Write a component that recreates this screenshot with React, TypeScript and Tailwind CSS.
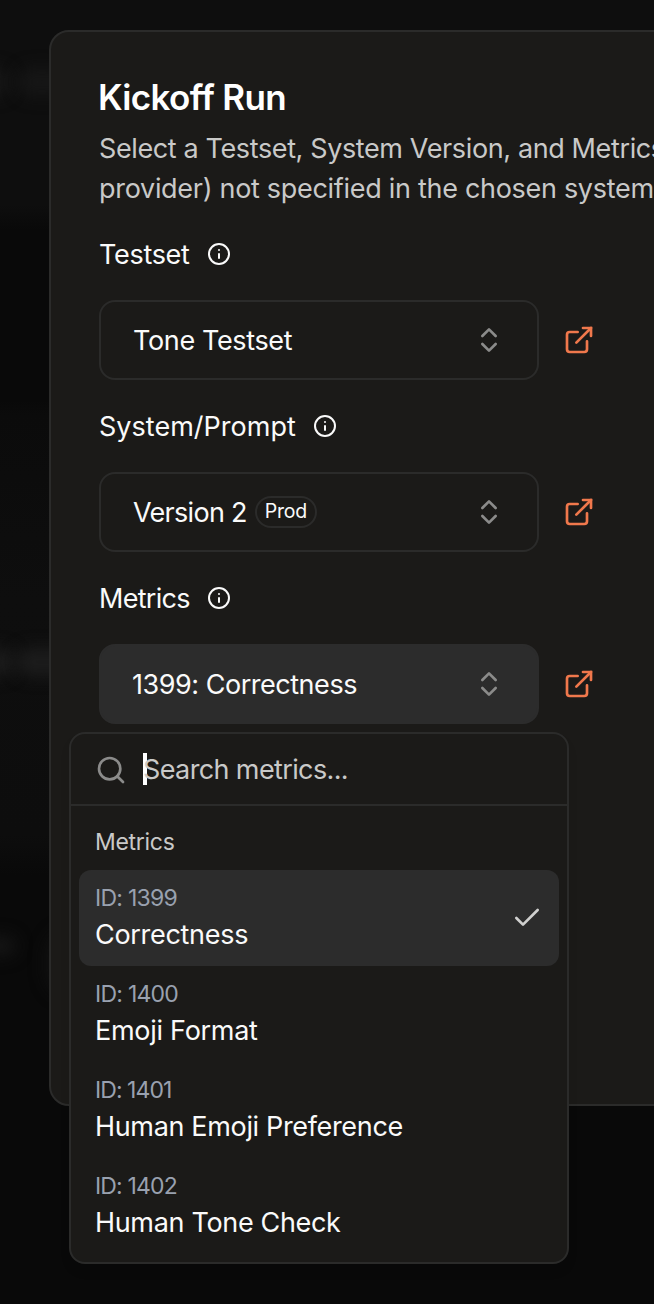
import { Check, ChevronsUpDown, Info, Search } from "lucide-react";
import type { ReactNode } from "react";

function ExternalLinkIcon() {
  return (
    <svg
      width="32"
      height="32"
      viewBox="0 0 24 24"
      fill="none"
      stroke="#f0784c"
      strokeWidth="2"
      className="shrink-0"
    >
      <path d="M18 13v6a2 2 0 0 1-2 2H5a2 2 0 0 1-2-2V8a2 2 0 0 1 2-2h6" strokeLinecap="round" />
      <polyline points="15 3 21 3 21 9" strokeLinecap="round" strokeLinejoin="miter" />
      <line x1="10" x2="21" y1="14" y2="3" strokeLinecap="round" />
    </svg>
  );
}

interface FieldProps {
  label: string;
  labelClass: string;
  open?: boolean;
  children: ReactNode;
}

function Field({ label, labelClass, open, children }: FieldProps) {
  return (
    <div className="flex flex-col gap-8">
      <div className="flex h-7 items-center gap-[17px]">
        <label className={`pt-0.5 text-[27px] leading-7 text-[#fafafa] ${labelClass}`}>{label}</label>
        <Info className="size-6 text-[#fafafa]" strokeWidth={2} />
      </div>
      <div className="flex items-center gap-6">
        <button
          className={`flex h-20 w-[440px] items-center justify-between rounded-2xl border-2 pr-8 pl-8 text-[27px] text-[#fafafa] ${
            open ? "border-[#2c2c2c] bg-[#2c2c2c]" : "border-[#2b2b2a]"
          }`}
        >
          {children}
          <ChevronsUpDown className="size-8 text-[#8b8b8a]" strokeWidth={2} />
        </button>
        <a>
          <ExternalLinkIcon />
        </a>
      </div>
    </div>
  );
}

const metrics = [
  { id: "1399", name: "Correctness", idClass: "tracking-[-0.75px]", nameClass: "tracking-[-0.3px]", selected: true },
  { id: "1400", name: "Emoji Format", idClass: "tracking-[-0.75px]", nameClass: "tracking-[-0.28px]" },
  { id: "1401", name: "Human Emoji Preference", idClass: "tracking-[-0.95px]", nameClass: "tracking-[-0.34px]" },
  { id: "1402", name: "Human Tone Check", idClass: "tracking-[-0.85px]", nameClass: "tracking-[-0.33px]" },
];

function MetricsPopover() {
  return (
    <div className="absolute top-[732px] left-[69px] w-[500px] rounded-2xl border-2 border-[#2b2b2a] bg-[#1b1a18] shadow-[0_8px_12px_-2px_rgba(0,0,0,0.1)]">
      <div className="flex h-[72px] items-center border-b-2 border-[#2b2b2a] pl-6">
        <Search className="mt-0.5 size-8 text-[#8b8b8a]" strokeWidth={2} />
        <span className="ml-4 h-8 w-1 bg-white" />
        <span className="-ml-1 pt-0.5 text-[27px] leading-10 tracking-[-0.62px] text-[#c9c9c8]">Search metrics...</span>
      </div>
      <div className="p-2">
        <div className="flex h-14 items-center px-4 text-[23px] tracking-[-0.3px] text-[#c9c9c8]">Metrics</div>
        {metrics.map((m) => (
          <div
            key={m.id}
            className={`flex h-24 items-center justify-between rounded-xl px-4 ${m.selected ? "bg-[#2c2c2c]" : ""}`}
          >
            <div className="flex flex-col">
              <span className={`text-[23px] leading-8 text-[#99a1af] ${m.idClass}`}>ID: {m.id}</span>
              <span className={`mt-px -mb-px text-[27px] leading-10 text-[#fafafa] ${m.nameClass}`}>{m.name}</span>
            </div>
            {m.selected && <Check className="size-8 text-[#d0d0cf]" strokeWidth={2} />}
          </div>
        ))}
      </div>
    </div>
  );
}

function Backdrop() {
  return (
    <div className="absolute inset-0 overflow-hidden">
      <div className="absolute top-[68px] -left-10 h-7 w-[50px] rounded-full bg-[#171717] blur-[8px]" />
      <div className="absolute top-[68px] left-[18px] h-7 w-12 rounded-full bg-[#161616] blur-[8px]" />
      <div className="absolute top-[648px] -left-10 h-7 w-[54px] rounded-full bg-[#1c1c1c] blur-[8px]" />
      <div className="absolute top-[648px] left-4 h-7 w-14 rounded-full bg-[#1c1c1c] blur-[8px]" />
      <div className="absolute top-[936px] -left-8 h-5 w-12 rounded-full bg-[#151515] blur-[8px]" />
      <div className="absolute top-[930px] left-[46px] h-[66px] w-12 rounded-full bg-[#111111] blur-[8px]" />
    </div>
  );
}

export default function App() {
  return (
    <div className="relative h-[1304px] w-full overflow-hidden bg-[linear-gradient(180deg,#0e0e0e_0px,#0e0e0e_205px,#090909_230px,#090909_400px,#0b0b0b_415px,#0e0e0e_600px,#0d0d0d_835px,#090909_875px,#090909_1304px)] font-['Inter',sans-serif] font-normal">
      <Backdrop />
      <div className="relative mt-[30px] ml-[49px] flex h-[1076px] w-[900px] flex-col rounded-[20px] border-2 border-[#2b2b2a] bg-[#1b1a18] px-12 pt-[47px]">
        <h2 className="-ml-px text-[35px] leading-9 font-[560] tracking-[-0.66px] text-white">Kickoff Run</h2>
        <p className="mt-3.5 text-[27px] leading-10 whitespace-nowrap text-[#c9c9c8]">
          <span className="block tracking-[-0.38px]">Select a Testset, System Version, and Metrics</span>
          <span className="block tracking-[-0.3px]">provider) not specified in the chosen system</span>
        </p>
        <div className="mt-[31px] flex flex-col gap-8">
          <Field label="Testset" labelClass="tracking-[-0.31px]">
            <span className="pt-0.5 tracking-[-0.36px]">Tone Testset</span>
          </Field>
          <Field label="System/Prompt" labelClass="tracking-[0.02px]">
            <span className="flex items-center gap-2">
              <span className="pt-0.5 tracking-[-0.71px]">Version 2</span>
              <span className="flex h-8 items-center rounded-full border-2 border-[#2b2b2a] px-2 text-[19.5px] tracking-[-0.2px]">
                Prod
              </span>
            </span>
          </Field>
          <Field label="Metrics" labelClass="tracking-[-0.7px]" open>
            <span className="-ml-px pt-0.5 tracking-[-0.47px]">1399: Correctness</span>
          </Field>
        </div>
      </div>
      <MetricsPopover />
    </div>
  );
}
